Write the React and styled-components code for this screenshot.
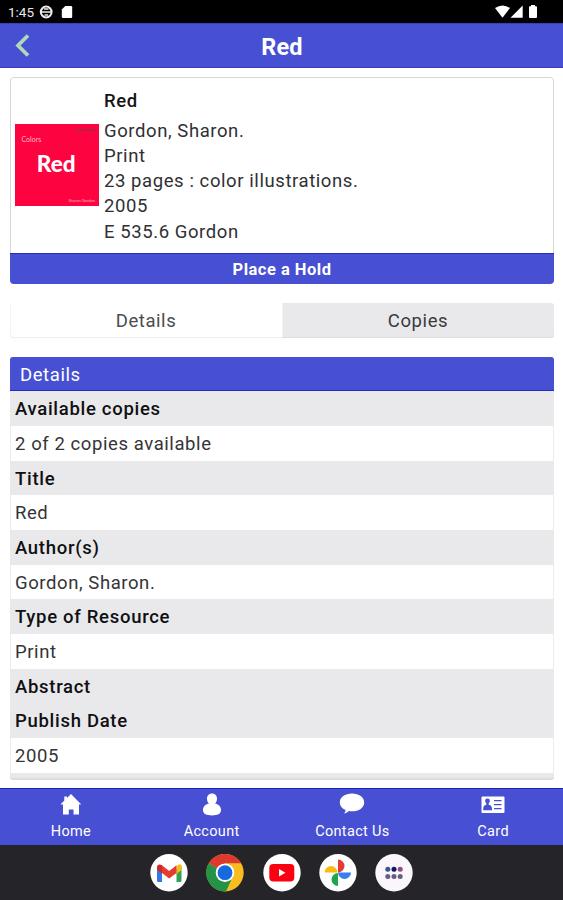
import React from 'react';
import styled, { createGlobalStyle } from 'styled-components';

const GlobalStyle = createGlobalStyle`
  * { box-sizing: border-box; }
  body { margin: 0; background: #fff; }
`;

const blue = '#474fd3';
const shade = '#e9e9eb';

const Screen = styled.div`
  width: 563px;
  height: 900px;
  display: flex;
  flex-direction: column;
  overflow: hidden;
  background: #fff;
  color: #303033;
  font-family: Roboto, 'Liberation Sans', sans-serif;
  font-size: 18.5px;
  letter-spacing: 0.58px;
`;

const StatusBar = styled.div`
  flex: none;
  height: 22.5px;
  padding: 0 26px 0 8px;
  display: flex;
  align-items: center;
  background: #000;
  color: #e8e8e8;
  font-size: 13.5px;
  letter-spacing: 0;
`;

const StatusTime = styled.span`
  width: 31px;
  line-height: 16px;
  padding-top: 1px;
`;

const StatusIcons = styled.svg`
  display: block;
  margin-left: ${(p) => (p.$end ? 'auto' : '0')};
`;

const Header = styled.header`
  flex: none;
  height: 45px;
  padding: 0 15px;
  display: grid;
  grid-template-columns: 40px 1fr 40px;
  align-items: center;
  background: ${blue};
  border-top: 1px solid #3a40b4;
  border-bottom: 1px solid #343bc4;
`;

const HeaderTitle = styled.h1`
  margin: 0;
  padding: 3px 0 0 1px;
  text-align: center;
  color: #fff;
  font-size: 23.5px;
  line-height: 28px;
  font-weight: 700;
  letter-spacing: 0.2px;
`;

const Content = styled.main`
  flex: none;
  height: 720px;
  padding: 9.5px 9px 0 10px;
`;

const BookCard = styled.section`
  height: 207px;
  display: flex;
  flex-direction: column;
  border-radius: 4px;
  overflow: hidden;
`;

const BookBody = styled.div`
  flex: 1;
  display: flex;
  align-items: center;
  padding-left: 3.5px;
  border: 1px solid #d6d6d6;
  border-bottom: 0;
  border-radius: 4px 4px 0 0;
`;

const Cover = styled.div`
  width: 84.5px;
  height: 82px;
  margin-top: -1px;
  padding: 4px 4px 0 7px;
  display: flex;
  flex-direction: column;
  background: #fd0340;
  color: #fff;
  font-family: Lato, sans-serif;
  letter-spacing: 0;
`;

const CoverMarks = styled.div`
  display: flex;
  justify-content: flex-end;
  gap: 2px;
  height: 3px;
  &::before, &::after {
    content: '';
    width: 8px;
    height: 2px;
    margin-top: 1px;
    background: #a62b40;
  }
`;

const CoverSeries = styled.div`
  margin-top: 4px;
  font-size: 7px;
  line-height: 8px;
  color: #ffb8c4;
`;

const CoverTitle = styled.div`
  margin-top: 7px;
  padding-right: 4px;
  text-align: center;
  font-size: 22.5px;
  line-height: 28px;
  font-weight: 900;
`;

const CoverAuthor = styled.div`
  margin-top: 20px;
  text-align: right;
  font-size: 4px;
  line-height: 5px;
  color: #ffb8c4;
`;

const BookInfo = styled.div`
  padding: 2.5px 0 0 5px;
  line-height: 25.25px;
`;

const BookTitle = styled.div`
  margin-bottom: 4.5px;
  font-weight: 500;
  color: #151515;
`;

const HoldButton = styled.button`
  flex: none;
  height: 31px;
  padding: 0;
  border: 0;
  border-top: 1px solid #252cc0;
  background: ${blue};
  color: #fff;
  font-family: inherit;
  font-size: 16.5px;
  font-weight: 700;
  letter-spacing: 0.5px;
`;

const Tabs = styled.div`
  height: 35px;
  margin-top: 19px;
  display: flex;
`;

const Tab = styled.div`
  flex: 1;
  text-align: center;
  line-height: 36px;
  background: ${(p) => (p.$active ? '#fff' : shade)};
  color: ${(p) => (p.$active ? '#4c4c4c' : '#3a3a3c')};
  border-radius: ${(p) => (p.$active ? '3px 0 0 3px' : '0 3px 3px 0')};
  box-shadow: inset 0 -1px ${(p) => (p.$active ? '#eee' : '#dedee0')},
    inset 1px 0 #f3f3f3;
`;

const Panel = styled.section`
  margin-top: 18.5px;
  height: 423.5px;
  border-radius: 3px;
  overflow: hidden;
  background: ${shade};
  border-bottom: 2px solid #dcdcde;
`;

const PanelTitle = styled.h2`
  margin: 0;
  height: 34.7px;
  padding: 1px 10px 0;
  line-height: 34px;
  font-size: 18.5px;
  font-weight: 400;
  color: #fff;
  background: ${blue};
  border-bottom: 1px solid #242bc2;
`;

const Row = styled.div`
  height: 34.7px;
  padding: 0 5px;
  line-height: 37px;
  font-weight: ${(p) => (p.$label ? 500 : 400)};
  letter-spacing: ${(p) => (p.$label ? 0.7 : 0.58)}px;
  color: ${(p) => (p.$label ? '#101012' : '#343436')};
  background: ${(p) => (p.$label ? shade : '#fff')};
  border: solid #ececec;
  border-width: ${(p) => (p.$label ? 0 : '0 1px')};
  padding-left: ${(p) => (p.$label ? 5 : 4)}px;
`;

const BottomNav = styled.nav`
  flex: none;
  height: 57px;
  display: grid;
  grid-template-columns: repeat(4, 1fr);
  background: ${blue};
  border-top: 1px solid #1d21be;
`;

const NavItem = styled.div`
  display: flex;
  flex-direction: column;
  align-items: center;
  padding: 3px 0 0 1px;
  color: #fff;
  font-size: 14.5px;
  line-height: 18px;
  letter-spacing: 0.32px;
`;

const NavIcon = styled.svg`
  width: 26px;
  height: 26px;
  margin-bottom: 5px;
  fill: #fff;
`;

const Dock = styled.div`
  flex: 1;
  display: flex;
  justify-content: center;
  gap: 18.2px;
  padding: 9px 0 0;
  background: #252529;
`;

const AppIcon = styled.svg`
  width: 38px;
  height: 38px;
`;

const details = [
  ['Available copies', '2 of 2 copies available'],
  ['Title', 'Red'],
  ['Author(s)', 'Gordon, Sharon.'],
  ['Type of Resource', 'Print'],
  ['Abstract', null],
  ['Publish Date', '2005'],
];

const navItems = [
  ['Home', <path key="h" d="M13 2 L23.3 12.5 H21 V22.5 H15.5 V17.5 H10.8 V22.5 H5 V12.5 H2.5 L6.3 8.5 V4.5 H9 V6 Z" />],
  ['Account', <path key="a" d="M13 1.500c3 0 5 2.100 5 5.200 0 2-.8 3.700-2 4.900 3.700.8 6 3.100 6 6.500 0 4-3.500 5.400-9 5.400s-9-1.400-9-5.400c0-3.400 2.300-5.700 6-6.500-1.200-1.200-2-2.900-2-4.900C8 3.600 10 1.500 13 1.500Z" />],
  ['Contact Us', <path key="c" d="M13 1.500c7 0 12.200 3.700 12.200 8.900s-5.200 8.900-12.200 8.900c-1.200 0-2.200-.1-3.200-.3-1.200 1.300-2.700 2.200-4.800 2.500 1-1.100 1.500-2.300 1.600-3.600C3 16.500.8 13.900.8 10.400.8 5.200 6 1.500 13 1.500Z" />],
  ['Card', (
    <g key="d">
      <rect x="1.500" y="4.500" width="23" height="16.500" rx="1" />
      <g fill={blue}>
        <circle cx="7.500" cy="9" r="2.400" />
        <path d="M6.300 10h2.400v2.700c2.200.5 3.300 1.500 3.300 4.500v1H3.200v-1c0-3 1-4 3.100-4.500Z" />
        <path d="M14 8h7.500v1.300H14zM14 12h7.500v1.300H14zM14 16h7.500v1.300H14z" />
      </g>
    </g>
  )],
];

const Disc = ({ children, fill = '#fff' }) => (
  <AppIcon viewBox="0 0 38 38">
    <circle cx="19" cy="18.700" r="18.700" fill={fill} />
    {children}
  </AppIcon>
);

export default function App() {
  return (
    <Screen>
      <GlobalStyle />
      <StatusBar>
        <StatusTime>1:45</StatusTime>
        <StatusIcons width="36" height="22" viewBox="39 0 36 22">
          <circle cx="46.200" cy="12" r="5.400" fill="none" stroke="#eee" strokeWidth="2" />
          <path d="M41 12h10.500M44 9h4.500M44.500 15h3.500" stroke="#eee" strokeWidth="1.300" />
          <path d="M65.200 6H71q1.200 0 1.200 1.200V16.800Q72.200 18 71 18H63q-1.200 0-1.200-1.200V9.500Z" fill="#fff" />
        </StatusIcons>
        <StatusIcons $end width="44" height="22" viewBox="493 0 44 22">
          <g fill="#fff">
            <path d="M495 8Q502.500 3 510 8L502.500 17.800Z" />
            <path d="M522.700 5.500V17.800H510.500Z" />
            <path d="M531 5h4v1.200h1.200q.8 0 .8.800V17q0 1-1 1h-6q-1 0-1-1V7q0-.8.800-.8H531Z" />
          </g>
        </StatusIcons>
      </StatusBar>
      <Header>
        <svg width="16" height="24" viewBox="0 0 16 24">
          <path d="M13 2.500L3 12.500L13 22.500" fill="none" stroke="#b3d7b9" strokeWidth="3.700" />
        </svg>
        <HeaderTitle>Red</HeaderTitle>
      </Header>
      <Content>
        <BookCard>
          <BookBody>
            <Cover>
              <CoverMarks />
              <CoverSeries>Colors</CoverSeries>
              <CoverTitle>Red</CoverTitle>
              <CoverAuthor>Sharon Gordon</CoverAuthor>
            </Cover>
            <BookInfo>
              <BookTitle>Red</BookTitle>
              <div>Gordon, Sharon.</div>
              <div>Print</div>
              <div>23 pages : color illustrations.</div>
              <div>2005</div>
              <div>E 535.6 Gordon</div>
            </BookInfo>
          </BookBody>
          <HoldButton>Place a Hold</HoldButton>
        </BookCard>
        <Tabs>
          <Tab $active>Details</Tab>
          <Tab>Copies</Tab>
        </Tabs>
        <Panel>
          <PanelTitle>Details</PanelTitle>
          {details.map(([label, value]) => (
            <React.Fragment key={label}>
              <Row $label>{label}</Row>
              {value && <Row>{value}</Row>}
            </React.Fragment>
          ))}
        </Panel>
      </Content>
      <BottomNav>
        {navItems.map(([label, icon]) => (
          <NavItem key={label}>
            <NavIcon viewBox="0 0 26 26">{icon}</NavIcon>
            {label}
          </NavItem>
        ))}
      </BottomNav>
      <Dock>
        <Disc>
          <path d="M7 12v14.500q0 1.500 1.500 1.500H12V15Z" fill="#3478e5" />
          <path d="M26.500 15v13H30q1.500 0 1.500-1.500V12Z" fill="#31a350" />
          <path d="M26.500 12.500L28 11q2-1.500 3.500.5v4.500l-5 4Z" fill="#f9bc15" />
          <path d="M7 12.500q1.500-3.500 5-1.200l7.200 5.700 7.300-5.700V19l-7.300 5.500L12 19 7 15.500Z" fill="#e63c30" />
          <path d="M7 12.500v3.300l5 3.700v-8.200Q8.500 9.500 7 12.500Z" fill="#c92b2b" />
        </Disc>
        <Disc fill="#f9bd20">
          <path d="M19 18.700L2.800 9.350A18.700 18.700 0 0 0 20 37.400L27.500 21Z" fill="#249247" />
          <path d="M19 18.700L2.800 9.350A18.700 18.700 0 0 1 35.200 9.350H19Z" fill="#dc3a2f" />
          <circle cx="19" cy="18.700" r="9.300" fill="#fff" />
          <circle cx="19" cy="18.700" r="7.400" fill="#1769e0" />
        </Disc>
        <Disc>
          <rect x="6.300" y="10" width="25" height="17.500" rx="4" fill="#fa0010" />
          <path d="M16 15v7.500l6.500-3.750Z" fill="#fff" />
        </Disc>
        <Disc>
          <path d="M19 5.500a6.500 6.500 0 0 1 0 13Z" fill="#e23c34" />
          <path d="M19 18.500H32a6.500 6.500 0 0 1-13 0Z" fill="#3b7de9" />
          <path d="M19 18.500V32a6.500 6.500 0 0 1 0-13Z" fill="#21a44b" />
          <path d="M19 18.500H5.500a6.500 6.500 0 0 1 13 0Z" fill="#fabb12" />
        </Disc>
        <Disc fill="#faf6fc">
          <circle cx="12.800" cy="15.200" r="2.500" fill="#38578e" />
          <circle cx="19" cy="15.200" r="2.500" fill="#13156e" />
          <circle cx="25.200" cy="15.200" r="2.500" fill="#945070" />
          <g fill="#666080">
            <circle cx="12.800" cy="22.500" r="2.500" />
            <circle cx="19" cy="22.500" r="2.500" />
            <circle cx="25.200" cy="22.500" r="2.500" />
          </g>
        </Disc>
      </Dock>
    </Screen>
  );
}
